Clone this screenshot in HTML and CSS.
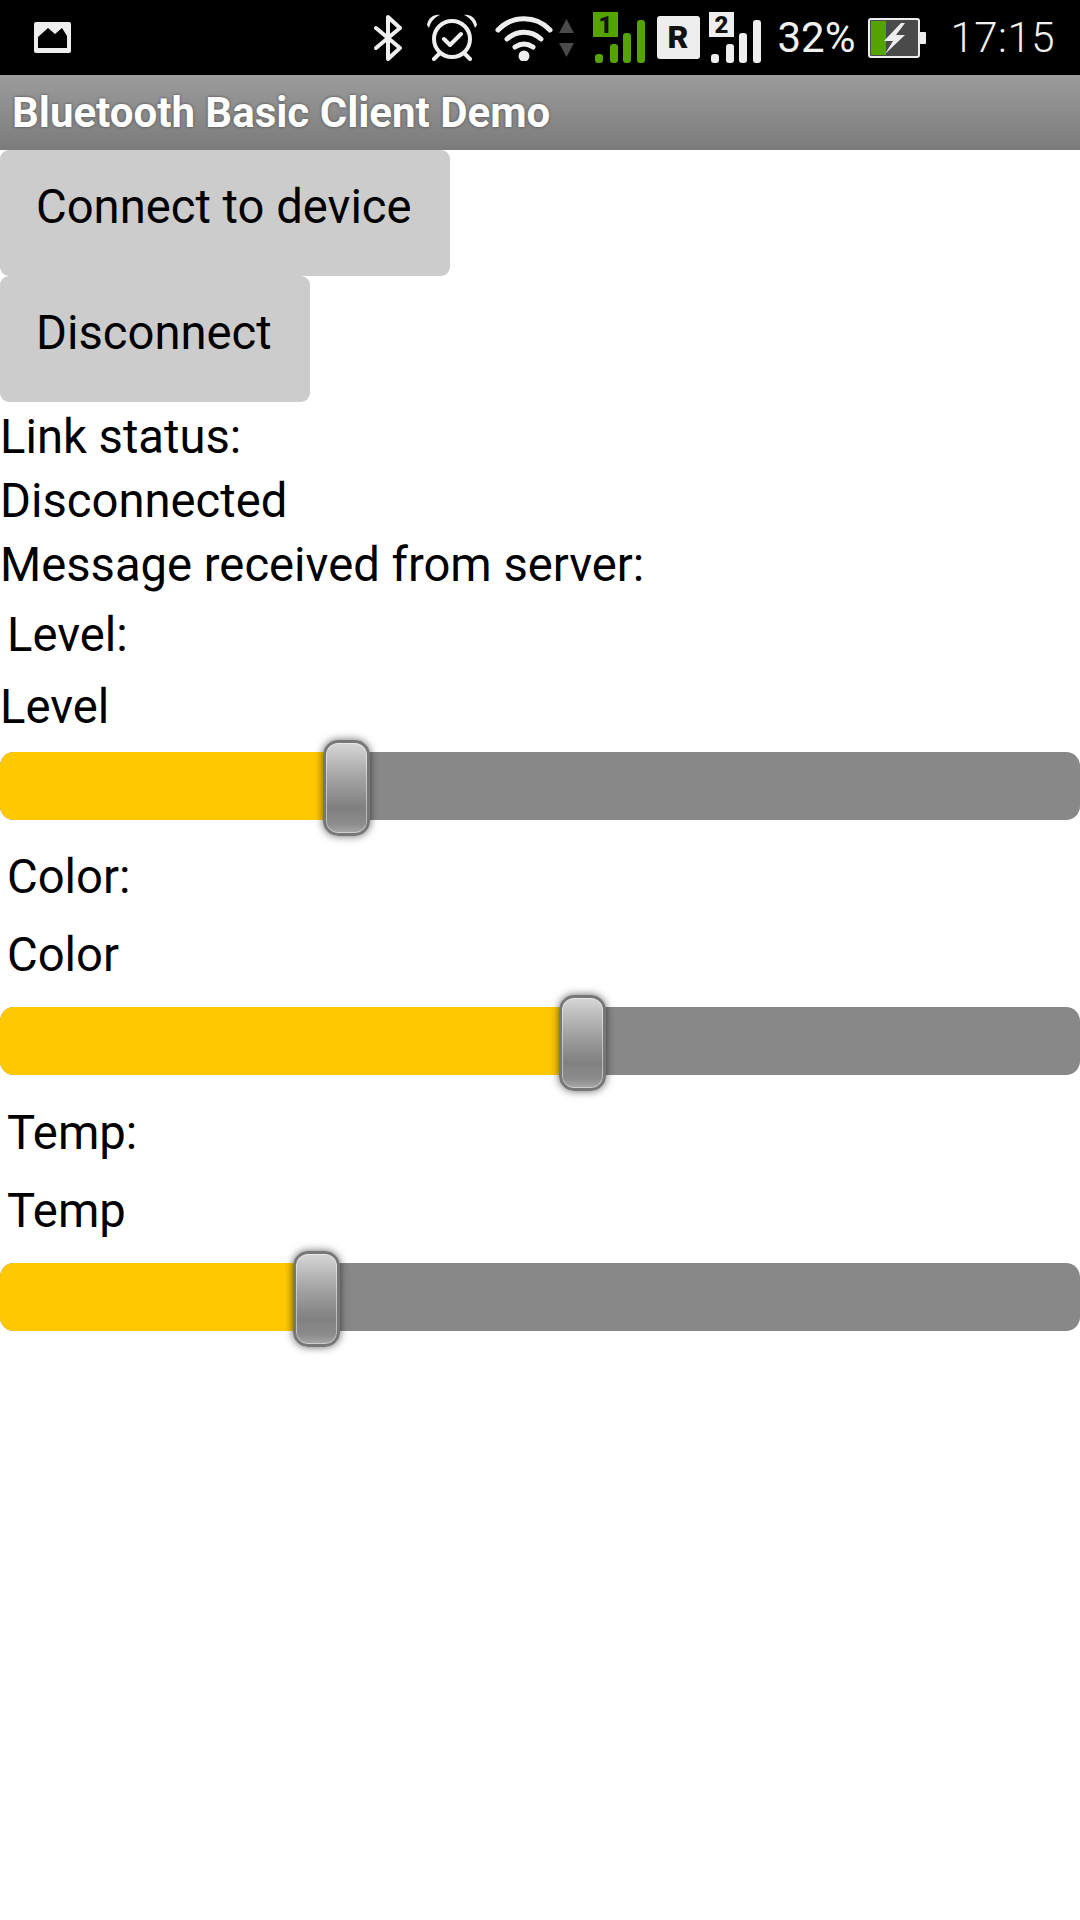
FILE: index.html
```html
<!DOCTYPE html>
<html lang="en">
<head>
    <meta charset="UTF-8">
    <meta name="viewport" content="width=device-width, initial-scale=1.0">
    <title>Bluetooth Basic Client Demo</title>
    <link rel="stylesheet" href="styles.css">
</head>
<body>
    <div class="status-bar">
        <svg class="icon-picture" width="37" height="31" viewBox="0 0 37 31">
            <path fill="#eee" fill-rule="evenodd" d="M2 0h33a2 2 0 0 1 2 2v27a2 2 0 0 1-2 2H2a2 2 0 0 1-2-2V2a2 2 0 0 1 2-2zM4 15v11h29V14l-5-8-7 6-7-6z"/>
        </svg>
        <div class="status-icons">
            <svg class="icon-bt" width="28" height="46" viewBox="0 0 28 46">
                <path fill="none" stroke="#eee" stroke-width="4" stroke-linecap="round" stroke-linejoin="round" d="M2 13l24 20-12 11V2l12 11L2 33"/>
            </svg>
            <svg class="icon-alarm" width="50" height="47" viewBox="0 0 50 47">
                <circle cx="25" cy="25" r="18" fill="none" stroke="#eee" stroke-width="4"/>
                <path fill="none" stroke="#eee" stroke-width="4" stroke-linecap="round" stroke-linejoin="round" d="M17 25l6 6 11-11M12 40l-5 5M38 40l5 5"/>
                <path fill="#eee" d="M0 11C1 4 7 0 13 1 8 3 4 7 2 14zM50 11C49 4 43 0 37 1c5 2 9 6 11 13z"/>
            </svg>
            <svg class="icon-wifi" width="58" height="46" viewBox="0 0 58 46">
                <g fill="none" stroke="#eee" stroke-width="5" stroke-linecap="round">
                    <path d="M3 15C17 0 41 0 55 15"/>
                    <path d="M12 24c10-9 24-9 34 0"/>
                    <path d="M20 32c6-4 12-4 18 0"/>
                </g>
                <circle cx="29" cy="41" r="5.500" fill="#eee"/>
            </svg>
            <svg class="icon-arrows" width="17" height="38" viewBox="0 0 17 38">
                <path fill="#4a4a4a" d="M8.500 0L16 14H1zM1 24h15L8.500 38z"/>
            </svg>
            <svg class="icon-sim" width="52" height="51" viewBox="0 0 52 51">
                <rect x="0" y="0" width="25" height="25" fill="#55a300"/>
                <text x="12.500" y="21" text-anchor="middle" class="sim-num">1</text>
                <g fill="#55a300">
                    <rect x="2" y="42" width="8" height="9" rx="3"/>
                    <rect x="17" y="32" width="8" height="19" rx="3"/>
                    <rect x="30" y="21" width="8" height="30" rx="3"/>
                    <rect x="44" y="8" width="8" height="43" rx="3"/>
                </g>
            </svg>
            <div class="roaming">R</div>
            <svg class="icon-sim2" width="52" height="51" viewBox="0 0 52 51">
                <rect x="0" y="0" width="25" height="25" fill="#eee"/>
                <text x="12.500" y="21" text-anchor="middle" class="sim-num">2</text>
                <g fill="#eee">
                    <rect x="2" y="42" width="8" height="9" rx="3"/>
                    <rect x="17" y="32" width="8" height="19" rx="3"/>
                    <rect x="30" y="21" width="8" height="30" rx="3"/>
                    <rect x="44" y="8" width="8" height="43" rx="3"/>
                </g>
            </svg>
            <span class="percent">32%</span>
            <svg class="icon-battery" width="58" height="40" viewBox="0 0 58 40">
                <rect x="1" y="1" width="50" height="38" rx="2" fill="#4a4a4a" stroke="#eee" stroke-width="2"/>
                <rect x="3" y="3" width="15" height="34" fill="#55a300"/>
                <rect x="51" y="14" width="7" height="12" rx="1" fill="#eee"/>
                <path fill="#eee" d="M33 5L16 23h9l-8 13 20-19h-9l9-12z"/>
            </svg>
            <span class="clock">17:15</span>
        </div>
    </div>

    <div class="title-bar">Bluetooth Basic Client Demo</div>

    <button class="btn" type="button">Connect to device</button>
    <button class="btn" type="button">Disconnect</button>

    <div class="line first">Link status:</div>
    <div class="line">Disconnected</div>
    <div class="line">Message received from server:</div>

    <div class="field field-level">
        <div class="field-title">Level:</div>
        <div class="field-name flush">Level</div>
        <div class="slider">
            <div class="slider-fill" style="width: 346px"></div>
            <div class="slider-thumb" style="left: 323px"></div>
        </div>
    </div>

    <div class="field">
        <div class="field-title">Color:</div>
        <div class="field-name">Color</div>
        <div class="slider">
            <div class="slider-fill" style="width: 583px"></div>
            <div class="slider-thumb" style="left: 559px"></div>
        </div>
    </div>

    <div class="field">
        <div class="field-title">Temp:</div>
        <div class="field-name">Temp</div>
        <div class="slider">
            <div class="slider-fill" style="width: 316px"></div>
            <div class="slider-thumb" style="left: 293px"></div>
        </div>
    </div>
</body>
</html>
```

FILE: styles.css
```css
html, body {
    margin: 0;
    padding: 0;
}
body {
    width: 1080px;
    height: 1920px;
    overflow: hidden;
    background-color: #fff;
    color: #000;
    font-family: Roboto, "Noto Sans", sans-serif;
    font-size: 47.2px;
}

/* status bar */
.status-bar {
    display: flex;
    align-items: center;
    justify-content: space-between;
    height: 75px;
    background-color: #000;
    padding: 0 25px 0 34px;
    box-sizing: border-box;
}
.status-icons {
    display: flex;
    align-items: center;
    height: 75px;
}
.status-icons svg {
    display: block;
    flex: none;
}
.icon-alarm { margin-left: 25px; }
.icon-wifi { margin-left: 18px; }
.icon-arrows { margin-left: 5px; }
.icon-sim { margin-left: 18px; }
.icon-sim2 { margin-left: 9px; }
.icon-battery { margin-left: 13px; margin-top: 1px; }
.sim-num {
    fill: #111;
    font-family: Roboto, sans-serif;
    font-weight: 900;
    font-size: 24px;
}
.roaming {
    width: 43px;
    height: 43px;
    margin-left: 12px;
    background-color: #eee;
    border-radius: 3px;
    color: #111;
    font-weight: 900;
    font-size: 32px;
    line-height: 43px;
    text-align: center;
}
.percent, .clock {
    color: #f0f0f0;
    font-size: 42px;
    line-height: 75px;
}
.percent { margin-left: 17px; }
.clock {
    margin-left: 24px;
    font-weight: 300;
    letter-spacing: 0.5px;
}

.title-bar {
    height: 75px;
    padding-left: 12px;
    background: linear-gradient(#9c9c9c, #7b7b7b);
    color: #fff;
    font-size: 42px;
    font-weight: 700;
    line-height: 75px;
    text-shadow: 0 0 3px #444;
}

.btn {
    display: block;
    height: 126px;
    margin: 0;
    padding: 0 38px 13px 36px;
    border: none;
    border-radius: 9px;
    background-color: #ccc;
    color: #000;
    font-family: inherit;
    font-size: 47.2px;
}

.line {
    line-height: 64px;
}
.line.first {
    margin-top: 3px;
}

.field-title, .field-name {
    padding-left: 7px;
    line-height: 64px;
}
.field-title {
    padding-top: 6px;
}
.field-name {
    padding-top: 14px;
}
.field-name.flush {
    padding-left: 0;
    padding-top: 8px;
}

/* sliders */
.slider {
    position: relative;
    height: 68px;
    margin: 20px 0 20px;
    background-color: #888;
    border-radius: 14px;
}
.field-level .slider {
    margin-top: 13px;
    margin-bottom: 19px;
}
.slider-fill {
    height: 100%;
    background-color: #ffc800;
    border-radius: 14px 0 0 14px;
}
.slider-thumb {
    position: absolute;
    top: -12px;
    width: 47px;
    height: 96px;
    box-sizing: border-box;
    border: 3px solid #777;
    border-radius: 15px;
    background: linear-gradient(#d6d6d6, #a8a8a8 35%, #808080 72%, #8c8c8c 90%, #a8a8a8);
    box-shadow: 0 0 8px rgba(0, 0, 0, 0.6), inset 0 0 0 1px rgba(255, 255, 255, 0.45);
}
```
